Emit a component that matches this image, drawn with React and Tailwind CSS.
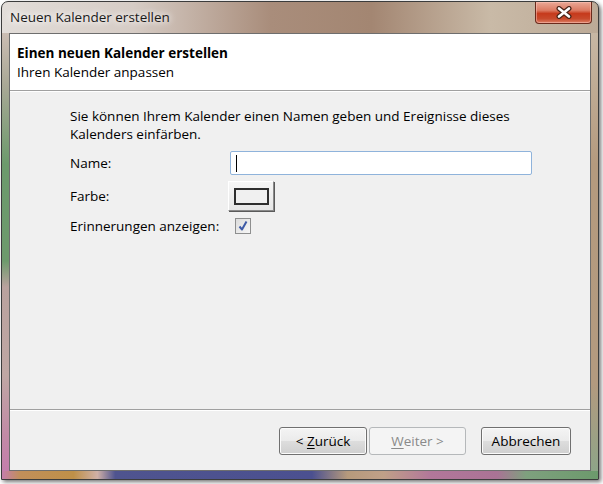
import React from 'react';

const font = "font-['Open_Sans','Noto_Sans',sans-serif]";

const WinButton = ({ children, disabled, className = '' }) => (
  <div
    className={
      'h-[28px] flex items-center justify-center rounded-[3px] border text-[13.5px] ' +
      (disabled
        ? 'border-[#b5b8ba] bg-[#f4f4f4] text-[#8a8a8a] '
        : 'border-[#707070] bg-[linear-gradient(to_bottom,#f4f4f4_0%,#ebebeb_48%,#dddddd_52%,#cfcfcf_100%)] text-black shadow-[inset_0_0_0_1px_#fbfbfb] ') +
      className
    }
  >
    {children}
  </div>
);

export default function App() {
  return (
    <div className={'w-[603px] h-[484px] bg-white overflow-hidden pl-px pt-px ' + font}>
      {/* window */}
      <div className="w-[598px] h-[479px] flex flex-col rounded-t-[7px] border border-[#3c3c3c] shadow-[2px_2px_4px_rgba(0,0,0,0.55)] bg-[linear-gradient(to_right,#e2ddd9_0%,#d6ccc5_22%,#a98d7b_45%,#a38672_62%,#c9baa7_82%,#bcaa97_100%)]">
        {/* title bar */}
        <div className="h-[31px] flex items-start">
          <div className="pl-[8px] pt-[6px] text-[13.5px] text-[#1a1a1a] leading-[18px] [text-shadow:0_0_6px_#ffffff,0_0_10px_#ffffff]">
            Neuen Kalender erstellen
          </div>
          <div className="ml-auto mr-[6px] w-[57px] h-[22px] rounded-b-[4px] border border-t-0 border-[#6a2a1c] bg-[linear-gradient(to_bottom,#e9a896_0%,#dc7a62_40%,#c63a1c_55%,#c84a2c_80%,#dd8066_100%)] flex items-center justify-center shadow-[inset_0_0_0_1px_rgba(255,200,190,0.5)]">
            <svg width="16" height="13" viewBox="0 0 16 13">
              <path d="M3 2.5 L13 10.5 M13 2.5 L3 10.5" stroke="#4a2418" strokeWidth="5" strokeLinecap="round" />
              <path d="M3 2.5 L13 10.5 M13 2.5 L3 10.5" stroke="#ffffff" strokeWidth="2.6" strokeLinecap="round" />
            </svg>
          </div>
        </div>

        {/* frame middle */}
        <div className="flex flex-1">
          <div className="w-[7px] bg-[linear-gradient(to_bottom,#cbbdb3_0%,#a9a896_12%,#6c9a6c_30%,#6d9a6c_52%,#b9a29e_58%,#bfa7a4_78%,#c28aa6_92%,#c47eac_100%)]" />
          {/* client */}
          <div className="w-[582px] flex flex-col border border-[#6e6e6e] bg-[#f0f0f0] text-[13.5px] text-black">
            <div className="h-[57px] bg-white border-b border-[#a0a0a0] pl-[7px] pt-[10px] leading-[19px]">
              <div className="font-bold">Einen neuen Kalender erstellen</div>
              <div>Ihren Kalender anpassen</div>
            </div>
            <div className="h-px bg-white" />

            <div className="flex-1 pl-[60px] pt-[15px] leading-[18px]">
              <p className="w-[470px]">
                Sie können Ihrem Kalender einen Namen geben und Ereignisse dieses Kalenders einfärben.
              </p>
              <div className="grid grid-cols-[160px_auto] items-center mt-[8px] gap-y-[6px]">
                <div>Name:</div>
                <div className="w-[302px] h-[24px] rounded-[2px] border border-[#8fb3db] bg-white flex items-center pl-[5px]">
                  <div className="w-px h-[17px] bg-black" />
                </div>
                <div>Farbe:</div>
                <div className="-ml-[2px] w-[46px] h-[30px] flex items-center justify-center border border-t-white border-l-white border-r-[#8a8a8a] border-b-[#8a8a8a] bg-[linear-gradient(to_bottom,#f6f6f6,#e6e6e6)] shadow-[1px_1px_0_#5a5a5a]">
                  <div className="w-[35px] h-[17px] border-2 border-[#2e2e2e] bg-[#f0f0f0]" />
                </div>
                <div>Erinnerungen anzeigen:</div>
                <div className="pl-[5px]">
                  <div className="w-[16px] h-[16px] border border-[#8e8f8f] bg-[linear-gradient(to_bottom_right,#dcdcdc,#f6f6f6)] flex items-center justify-center">
                    <svg width="12" height="12" viewBox="0 0 12 12">
                      <path d="M2.5 6.5 L5 9.5 L9.5 1.5" fill="none" stroke="#3d5aa6" strokeWidth="2" strokeLinejoin="round" />
                    </svg>
                  </div>
                </div>
              </div>
            </div>

            <div className="h-px bg-[#a0a0a0]" />
            <div className="h-px bg-white" />
            <div className="h-[59px] flex items-start justify-end pt-[16px] pr-[19px]">
              <WinButton className="w-[88px]">
                &lt;&nbsp;<span className="underline underline-offset-2">Z</span>urück
              </WinButton>
              <WinButton disabled className="w-[97px] ml-[2px]">
                <span className="underline underline-offset-2">W</span>eiter&nbsp;&gt;
              </WinButton>
              <WinButton className="w-[90px] ml-[15px]">Abbrechen</WinButton>
            </div>
          </div>
          <div className="w-[7px] bg-[linear-gradient(to_bottom,#c7b7a4_0%,#b49a7e_30%,#b39a7f_80%,#8ea488_100%)]" />
        </div>

        {/* bottom frame */}
        <div className="h-[8px] bg-[linear-gradient(to_right,#c47eac_0%,#c18f5a_3%,#bf9048_12%,#d0b0a6_16%,#4f548f_19%,#4b5090_52%,#b69a7c_58%,#c0a088_64%,#b2779a_72%,#aa7395_83%,#7ea07e_88%,#6c9a6c_100%)]" />
      </div>
    </div>
  );
}
